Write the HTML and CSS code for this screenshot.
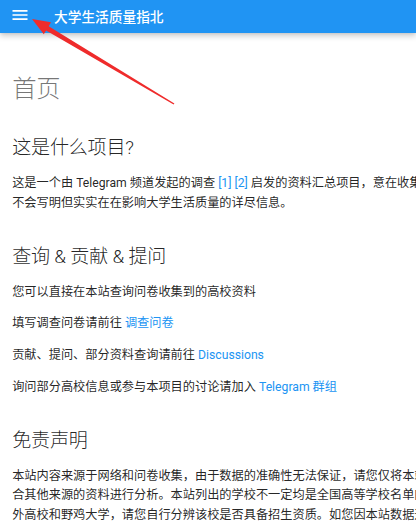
FILE: index.html
```html
<!DOCTYPE html>
<html lang="zh-CN">
<head>
<meta charset="utf-8">
<title>大学生活质量指北</title>
<link rel="stylesheet" href="styles.css">
</head>
<body>
  <header class="topbar">
    <button class="menu-btn" aria-label="导航">
      <svg viewBox="0 0 24 24" width="20" height="20"><path d="M3 6h18v2H3V6m0 5h18v2H3v-2m0 5h18v2H3v-2z"/></svg>
    </button>
    <span class="topbar-title">大学生活质量指北</span>
  </header>

  <main class="content">
    <article class="doc">
      <h1>首页</h1>

      <h2>这是什么项目?</h2>
      <p>这是一个由 Telegram 频道发起的调查 <a href="#">[1]</a> <a href="#">[2]</a> 启发的资料汇总项目，意在收集各高校那些<br>不会写明但实实在在影响大学生活质量的详尽信息。</p>

      <h2>查询 &amp; 贡献 &amp; 提问</h2>
      <p>您可以直接在本站查询问卷收集到的高校资料</p>
      <p>填写调查问卷请前往 <a href="#">调查问卷</a></p>
      <p>贡献、提问、部分资料查询请前往 <a href="#">Discussions</a></p>
      <p>询问部分高校信息或参与本项目的讨论请加入 <a href="#">Telegram 群组</a></p>

      <h2>免责声明</h2>
      <p>本站内容来源于网络和问卷收集，由于数据的准确性无法保证，请您仅将本站数据作为参考，并结合其他来源的资料进行分析。本站列出的学校不一定均是全国高等学校名单内的高校，可能包含境外高校和野鸡大学，请您自行分辨该校是否具备招生资质。如您因本站数据造成任何损失，本站概不负责。</p>
    </article>
  </main>

  <!-- red annotation arrow drawn over the screenshot -->
  <svg class="annotation" width="416" height="526" viewBox="0 0 416 526">
    <polygon points="32,19 51,22.3 48.7,26.2 174.4,103.4 173.6,104.6 46.1,30.4 43.8,34.3"/>
  </svg>
</body>
</html>
```

FILE: styles.css
```css
* {
  box-sizing: border-box;
}

html, body {
  margin: 0;
  padding: 0;
  overflow: hidden;
}

body {
  width: 416px;
  height: 526px;
  position: relative;
  background: #ffffff;
  color: rgba(0, 0, 0, 0.87);
  font-family: Roboto, "Noto Sans CJK SC", sans-serif;
  font-size: 12.2px;
}

.topbar {
  position: relative;
  z-index: 2;
  height: 33px;
  display: flex;
  align-items: center;
  padding-left: 10px;
  background-color: #2094f3;
  color: #ffffff;
  box-shadow: 0 0 3px rgba(0, 0, 0, 0.1), 0 3px 6px rgba(0, 0, 0, 0.2);
}

.menu-btn {
  display: flex;
  padding: 0;
  margin: -3px 0 0;
  border: 0;
  background: none;
  cursor: pointer;
}

.menu-btn svg {
  fill: #ffffff;
}

.topbar-title {
  margin-left: 24px;
  margin-top: -2px;
  font-size: 13.7px;
  font-weight: 500;
}

.content {
  padding: 40px 0 0 12.2px;
}

.doc {
  width: 527px;
}

h1 {
  margin: 0 0 30.5px;
  font-size: 24.4px;
  line-height: 1.3;
  font-weight: 300;
  letter-spacing: -0.01em;
  color: rgba(0, 0, 0, 0.54);
}

h2 {
  margin: 30.5px 0 12.2px;
  font-size: 19.06px;
  line-height: 1.4;
  font-weight: 300;
  letter-spacing: -0.01em;
}

p {
  margin: 12.2px 0;
  line-height: 1.6;
}

a {
  color: #2094f3;
  text-decoration: none;
}

.annotation {
  position: absolute;
  top: 0;
  left: 0;
  z-index: 3;
  pointer-events: none;
}

.annotation polygon {
  fill: #ef2b2b;
}
```
